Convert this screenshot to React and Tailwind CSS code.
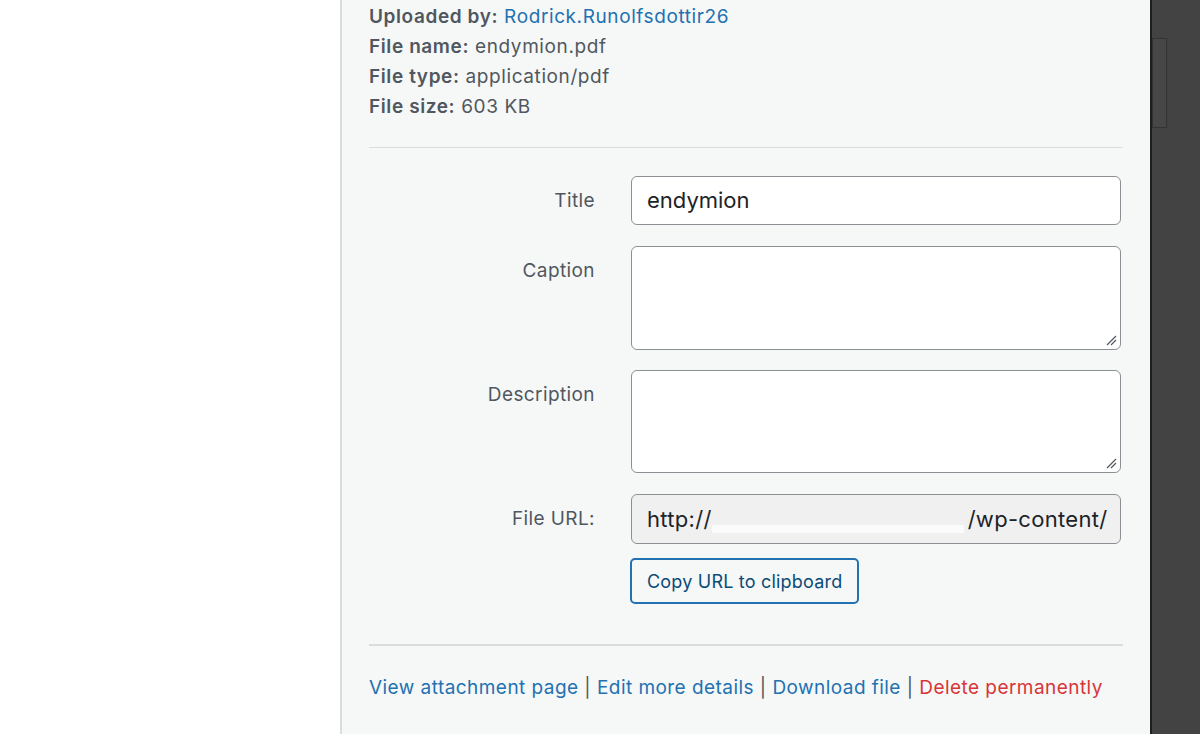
import React from "react";

function ResizeGrip() {
  return (
    <svg className="absolute right-[3px] bottom-[3px]" width="11" height="11" viewBox="0 0 11 11">
      <path d="M1 10 L10 1 M5 10 L10 5" stroke="#50575e" strokeWidth="1.2" />
    </svg>
  );
}

function Row({ label, children }) {
  return (
    <div className="flex">
      <div className="w-[226px] shrink-0 pt-[11px] text-right text-[19px] leading-[28px] tracking-[0.4px] text-[#50575e]">
        {label}
      </div>
      <div className="ml-[36px] w-[490px]">{children}</div>
    </div>
  );
}

export default function App() {
  return (
    <div
      className="flex h-[734px] w-[1200px] overflow-hidden bg-white"
      style={{ fontFamily: "Inter, 'Noto Sans', sans-serif" }}
    >
      <div className="w-[340px] shrink-0 bg-white" />

      {/* DETAILS PANEL */}
      <div className="w-[810px] shrink-0 border-l-2 border-[#dcdcde] bg-[#f6f7f7] px-[27px]">
        <div className="mt-[2px] text-[19px] leading-[30px] tracking-[0.6px] text-[#50575e]">
          <div>
            <span className="font-semibold">Uploaded by:</span>{" "}
            <span className="text-[#2271b1]">Rodrick.Runolfsdottir26</span>
          </div>
          <div>
            <span className="font-semibold">File name:</span> endymion.pdf
          </div>
          <div>
            <span className="font-semibold">File type:</span> application/pdf
          </div>
          <div>
            <span className="font-semibold">File size:</span> 603 KB
          </div>
        </div>

        <div className="mt-[25px] h-px w-[754px] bg-[#dcdcde]" />

        <div className="mt-[28px] flex flex-col">
          <Row label="Title">
            <div className="flex h-[49px] items-center rounded-[6px] border border-[#8c8f94] bg-white px-[15px] text-[22px] text-[#1d2327]">
              endymion
            </div>
          </Row>
          <div className="h-[21px]" />
          <Row label="Caption">
            <div className="relative h-[104px] rounded-[6px] border border-[#8c8f94] bg-white">
              <ResizeGrip />
            </div>
          </Row>
          <div className="h-[20px]" />
          <Row label="Description">
            <div className="relative h-[103px] rounded-[6px] border border-[#8c8f94] bg-white">
              <ResizeGrip />
            </div>
          </Row>
          <div className="h-[21px]" />
          <Row label="File URL:">
            <div className="flex h-[50px] items-center overflow-hidden whitespace-nowrap rounded-[6px] border border-[#8c8f94] bg-[#f0f0f1] px-[15px] text-[22px] tracking-[0.3px] text-[#1d2327]">
              <span>http://</span>
              <span className="mt-[20px] inline-block h-[8px] w-[252px] shrink-0 bg-white/70" />
              <span className="ml-[4px]">/wp-content/</span>
            </div>
            <button className="mt-[14px] -ml-px h-[46px] rounded-[5px] border-2 border-[#2271b1] bg-[#f6f7f7] px-[15px] text-[18px] tracking-[0.2px] text-[#0a4b78]">
              Copy URL to clipboard
            </button>
          </Row>
        </div>

        <div className="mt-[40px] h-[2px] w-[754px] bg-[#dcdcde]" />

        <div className="mt-[28px] text-[19px] leading-[28px] tracking-[0.45px] text-[#50575e]">
          <span className="text-[#2271b1]">View attachment page</span> |{" "}
          <span className="text-[#2271b1]">Edit more details</span> |{" "}
          <span className="text-[#2271b1]">Download file</span> |{" "}
          <span className="text-[#d63638]">Delete permanently</span>
        </div>
      </div>

      {/* BACKDROP */}
      <div className="flex-1 border-l-2 border-[#1e1e1e] bg-[#434343] pt-[38px]">
        <div className="h-[90px] w-[15px] border border-[#333] bg-[#474747]" />
      </div>
    </div>
  );
}
